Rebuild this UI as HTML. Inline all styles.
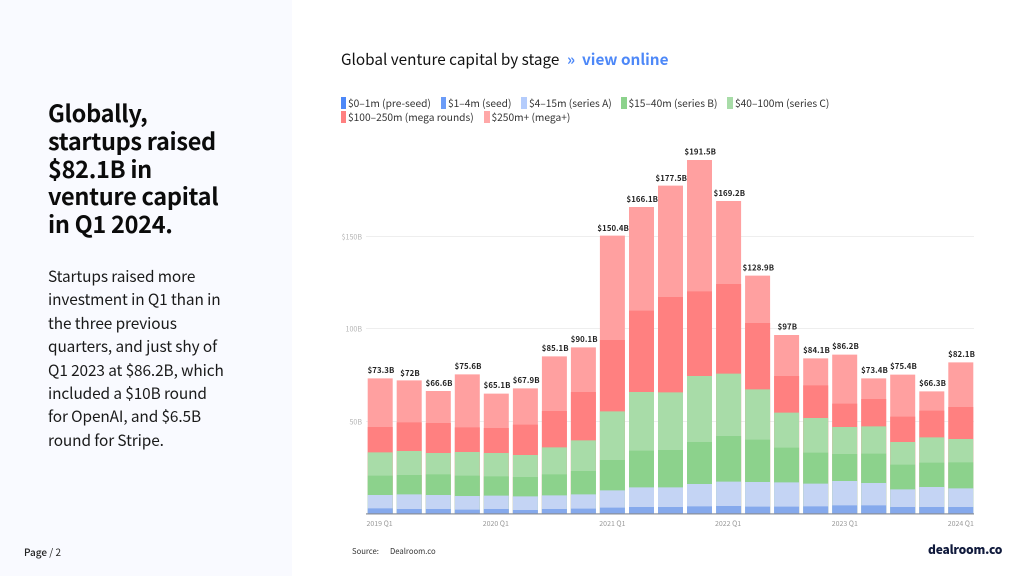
<!DOCTYPE html>
<html><head><meta charset="utf-8"><style>
html,body{margin:0;padding:0;background:#fff}
#p{position:relative;width:1024px;height:576px;overflow:hidden;background:#fff;font-family:"Noto Sans CJK JP","Liberation Sans",sans-serif;color:#111}
#s{position:absolute;left:0;top:0;width:292px;height:576px;background:#f9faff}
.a{position:absolute;white-space:nowrap}
.l{top:95px;font-size:10.2px;line-height:15px;color:#333}
.m{top:109px;font-size:10.2px;line-height:15px;color:#333}
svg{position:absolute;left:0;top:0}
</style></head><body><div id="p">
<div id="s"></div>
<div class="a" style="left:48px;top:99px;font-size:23.5px;letter-spacing:-.3px;line-height:27.8px;font-weight:700;color:#0b0b0b">Globally,<br>startups raised<br>$82.1B in<br>venture capital<br>in Q1 2024.</div>
<div class="a" style="left:48px;top:265px;font-size:15.4px;letter-spacing:-.1px;line-height:23.4px;color:#1a1a1a">Startups raised more<br>investment in Q1 than in<br>the three previous<br>quarters, and just shy of<br>Q1 2023 at $86.2B, which<br>included a $10B round<br>for OpenAI, and $6.5B<br>round for Stripe.</div>
<div class="a" style="left:24px;top:544px;font-size:10px;line-height:16px;color:#222"><span style="font-weight:500">Page</span> / 2</div>
<div class="a" style="left:341px;top:47px;font-size:15.3px;line-height:24px;color:#111">Global venture capital by stage</div>
<div class="a" style="left:567px;top:47px;font-size:15.3px;line-height:24px;color:#4d88f8;font-weight:700">»</div>
<div class="a" style="left:582px;top:47px;font-size:15.3px;line-height:24px;color:#4d88f8;font-weight:700">view online</div>
<div class="a l" style="left:348px">$0–1m (pre-seed)</div>
<div class="a l" style="left:448px">$1–4m (seed)</div>
<div class="a l" style="left:529px">$4–15m (series A)</div>
<div class="a l" style="left:628.500px">$15–40m (series B)</div>
<div class="a l" style="left:735px">$40–100m (series C)</div>
<div class="a m" style="left:348px">$100–250m (mega rounds)</div>
<div class="a m" style="left:491.500px">$250m+ (mega+)</div>
<div class="a" style="left:352px;top:545px;font-size:7.7px;line-height:13px;color:#333">Source:</div>
<div class="a" style="left:390px;top:545px;font-size:7.7px;line-height:13px;color:#333">Dealroom.co</div>
<div class="a" style="left:928px;top:541px;font-size:12px;letter-spacing:-.2px;line-height:18px;font-weight:900;color:#101a3c">dealroom.co</div>
<svg width="1024" height="576" viewBox="0 0 1024 576">
<rect x="341" y="97" width="5" height="12" fill="#4d88f8"/><rect x="441" y="97" width="5" height="12" fill="#6b9cf8"/><rect x="521" y="97" width="6" height="12" fill="#b4ccfc"/><rect x="621" y="97" width="6" height="12" fill="#8cd28c"/><rect x="727" y="97" width="6" height="12" fill="#a8dca8"/><rect x="341" y="111" width="5" height="12" fill="#ff8080"/><rect x="484" y="111" width="6" height="12" fill="#ffa8a8"/>
<g fill="#eee"><rect x="366" y="236" width="608" height="1"/><rect x="366" y="328" width="608" height="1"/><rect x="366" y="421" width="608" height="1"/></g>
<g transform="translate(0,340) scale(1,.33333)">
<path fill="#ffa0a0" d="M367.7 115h25V521h-25zM396.7 121h25V521h-25zM425.8 153h25V521h-25zM454.8 103h25V521h-25zM483.8 161h25V521h-25zM512.9 145h25V521h-25zM541.9 49h25V521h-25zM570.9 22h25V521h-25zM599.9 -313h25V521h-25zM629 -399h25V521h-25zM658 -463h25V521h-25zM687 -540h25V521h-25zM716.1 -417h25V521h-25zM745.1 -193h25V521h-25zM774.1 -15h25V521h-25zM803.2 55h25V521h-25zM832.2 44h25V521h-25zM861.2 115h25V521h-25zM890.2 104h25V521h-25zM919.3 154h25V521h-25zM948.3 67h25V521h-25z"/>
<path fill="#ff8080" d="M367.7 261h25V521h-25zM396.7 247h25V521h-25zM425.8 249h25V521h-25zM454.8 262h25V521h-25zM483.8 264h25V521h-25zM512.9 254h25V521h-25zM541.9 213h25V521h-25zM570.9 156h25V521h-25zM599.9 0h25V521h-25zM629 -88h25V521h-25zM658 -129h25V521h-25zM687 -146h25V521h-25zM716.1 -168h25V521h-25zM745.1 -51h25V521h-25zM774.1 108h25V521h-25zM803.2 136h25V521h-25zM832.2 191h25V521h-25zM861.2 177h25V521h-25zM890.2 230h25V521h-25zM919.3 212h25V521h-25zM948.3 201h25V521h-25z"/>
<path fill="#a8dca8" d="M367.7 337h25V521h-25zM396.7 333h25V521h-25zM425.8 339h25V521h-25zM454.8 336h25V521h-25zM483.8 339h25V521h-25zM512.9 345h25V521h-25zM541.9 322h25V521h-25zM570.9 301h25V521h-25zM599.9 214h25V521h-25zM629 156h25V521h-25zM658 157h25V521h-25zM687 108h25V521h-25zM716.1 101h25V521h-25zM745.1 148h25V521h-25zM774.1 218h25V521h-25zM803.2 234h25V521h-25zM832.2 261h25V521h-25zM861.2 259h25V521h-25zM890.2 306h25V521h-25zM919.3 292h25V521h-25zM948.3 297h25V521h-25z"/>
<path fill="#8cd28c" d="M367.7 407h25V521h-25zM396.7 405h25V521h-25zM425.8 403h25V521h-25zM454.8 407h25V521h-25zM483.8 409h25V521h-25zM512.9 411h25V521h-25zM541.9 403h25V521h-25zM570.9 393h25V521h-25zM599.9 360h25V521h-25zM629 332h25V521h-25zM658 330h25V521h-25zM687 306h25V521h-25zM716.1 288h25V521h-25zM745.1 299h25V521h-25zM774.1 323h25V521h-25zM803.2 338h25V521h-25zM832.2 342h25V521h-25zM861.2 341h25V521h-25zM890.2 374h25V521h-25zM919.3 368h25V521h-25zM948.3 367h25V521h-25z"/>
<path fill="#c4d4f4" d="M367.7 465h25V521h-25zM396.7 463h25V521h-25zM425.8 465h25V521h-25zM454.8 468h25V521h-25zM483.8 467h25V521h-25zM512.9 469h25V521h-25zM541.9 466h25V521h-25zM570.9 463h25V521h-25zM599.9 451h25V521h-25zM629 442h25V521h-25zM658 442h25V521h-25zM687 432h25V521h-25zM716.1 425h25V521h-25zM745.1 426h25V521h-25zM774.1 427h25V521h-25zM803.2 431h25V521h-25zM832.2 423h25V521h-25zM861.2 429h25V521h-25zM890.2 448h25V521h-25zM919.3 441h25V521h-25zM948.3 445h25V521h-25z"/>
<path fill="#85a9ec" d="M367.7 505h25V521h-25zM396.7 507h25V521h-25zM425.8 507h25V521h-25zM454.8 509h25V521h-25zM483.8 507h25V521h-25zM512.9 510h25V521h-25zM541.9 507h25V521h-25zM570.9 506h25V521h-25zM599.9 503h25V521h-25zM629 501h25V521h-25zM658 501h25V521h-25zM687 499h25V521h-25zM716.1 498h25V521h-25zM745.1 500h25V521h-25zM774.1 500h25V521h-25zM803.2 499h25V521h-25zM832.2 496h25V521h-25zM861.2 496h25V521h-25zM890.2 501h25V521h-25zM919.3 501h25V521h-25zM948.3 501h25V521h-25z"/>
</g>
<rect x="366" y="513.300" width="608" height="1.200" fill="#8a8f98"/>
<g transform="translate(.8,0)" font-family="'Noto Sans CJK JP','Liberation Sans',sans-serif" font-size="7.800" font-weight="700" fill="#222" text-anchor="middle" letter-spacing=".1">
<text x="380.2" y="373">$73.3B</text><text x="409.2" y="376">$72B</text><text x="438.3" y="386">$66.6B</text><text x="467.3" y="369">$75.6B</text><text x="496.3" y="388">$65.1B</text><text x="525.4" y="383">$67.9B</text><text x="554.4" y="351">$85.1B</text><text x="583.4" y="342">$90.1B</text><text x="612.4" y="231">$150.4B</text><text x="641.5" y="202">$166.1B</text><text x="670.5" y="181">$177.5B</text><text x="699.5" y="154.500">$191.5B</text><text x="728.6" y="196">$169.2B</text><text x="757.6" y="270.500">$128.9B</text><text x="786.6" y="329.500">$97B</text><text x="815.7" y="353">$84.1B</text><text x="844.7" y="349">$86.2B</text><text x="873.7" y="373">$73.4B</text><text x="902.7" y="369">$75.4B</text><text x="931.8" y="386">$66.3B</text><text x="960.8" y="357">$82.1B</text>
</g>
<g font-family="'Noto Sans CJK JP','Liberation Sans',sans-serif" font-size="7.100" fill="#b4b4b4" text-anchor="end">
<text x="362" y="239.500">$150B</text><text x="362" y="331.500">100B</text><text x="362" y="424.500">50B</text>
</g>
<g font-family="'Noto Sans CJK JP','Liberation Sans',sans-serif" font-size="7" fill="#999">
<text x="366.500" y="526">2019 Q1</text><text x="482.700" y="526">2020 Q1</text><text x="599.300" y="526">2021 Q1</text><text x="715" y="526">2022 Q1</text><text x="831.700" y="526">2023 Q1</text><text x="947.700" y="526">2024 Q1</text>
</g>
</svg>
</div></body></html>
